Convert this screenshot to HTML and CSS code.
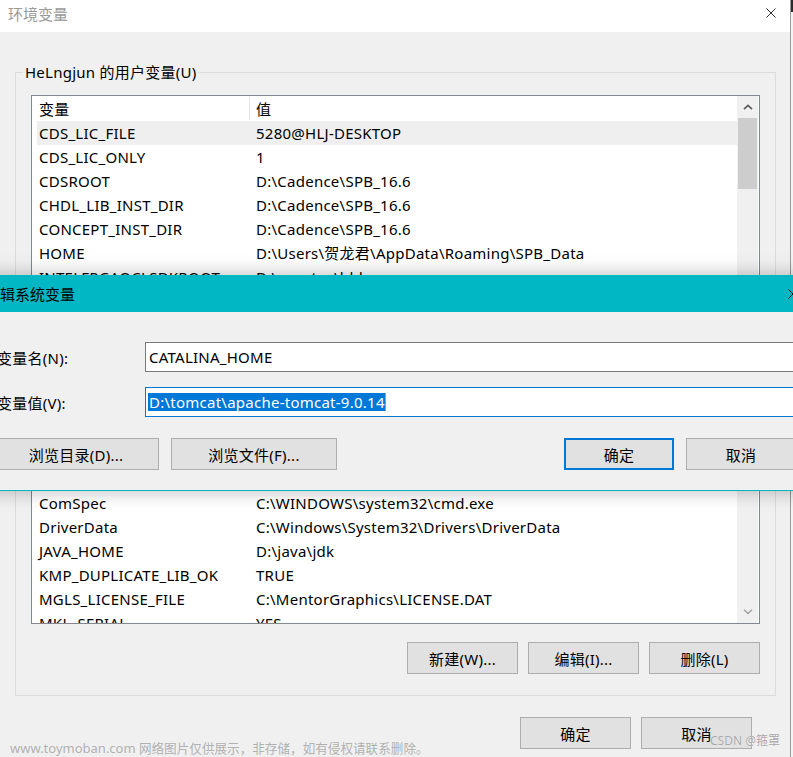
FILE: index.html
```html
<!DOCTYPE html>
<html lang="zh-CN">
<head>
<meta charset="utf-8">
<title>环境变量</title>
<link rel="stylesheet" href="styles.css">
</head>
<body>
<div class="window">
  <div class="titlebar">
    <span class="title">环境变量</span>
    <svg class="close" width="10" height="10" viewBox="0 0 10 10"><path d="M0.5 0.5L9.5 9.5M9.5 0.5L0.5 9.5" stroke="#333" stroke-width="1" fill="none"/></svg>
  </div>
  <div class="client">
    <fieldset class="group">
      <legend>HeLngjun 的用户变量(U)</legend>
      <div class="list">
        <div class="list-main">
          <div class="thead">
            <div class="th th1">变量</div>
            <div class="th th2">值</div>
          </div>
          <div class="row hl"><span class="c1">CDS_LIC_FILE</span><span>5280@HLJ-DESKTOP</span></div>
          <div class="row"><span class="c1">CDS_LIC_ONLY</span><span>1</span></div>
          <div class="row"><span class="c1">CDSROOT</span><span>D:\Cadence\SPB_16.6</span></div>
          <div class="row"><span class="c1">CHDL_LIB_INST_DIR</span><span>D:\Cadence\SPB_16.6</span></div>
          <div class="row"><span class="c1">CONCEPT_INST_DIR</span><span>D:\Cadence\SPB_16.6</span></div>
          <div class="row"><span class="c1">HOME</span><span>D:\Users\贺龙君\AppData\Roaming\SPB_Data</span></div>
          <div class="row"><span class="c1">INTELFPGAOCLSDKROOT</span><span>D:\quartus\hld</span></div>
          <div class="hidden-rows"></div>
          <div class="row"><span class="c1">ComSpec</span><span>C:\WINDOWS\system32\cmd.exe</span></div>
          <div class="row"><span class="c1">DriverData</span><span>C:\Windows\System32\Drivers\DriverData</span></div>
          <div class="row"><span class="c1">JAVA_HOME</span><span>D:\java\jdk</span></div>
          <div class="row"><span class="c1">KMP_DUPLICATE_LIB_OK</span><span>TRUE</span></div>
          <div class="row"><span class="c1">MGLS_LICENSE_FILE</span><span>C:\MentorGraphics\LICENSE.DAT</span></div>
          <div class="row"><span class="c1">MKL_SERIAL</span><span>YES</span></div>
        </div>
        <div class="scroll">
          <div class="sb-btn"><svg width="10" height="6" viewBox="0 0 10 6"><path d="M1 5.2L5 1.4L9 5.2" fill="none" stroke="#5a5a5a" stroke-width="1.6"/></svg></div>
          <div class="thumb"></div>
          <div class="sb-track"></div>
          <div class="sb-btn"><svg width="10" height="6" viewBox="0 0 10 6"><path d="M1 0.8L5 4.6L9 0.8" fill="none" stroke="#a0a0a0" stroke-width="1.4"/></svg></div>
        </div>
      </div>
      <div class="actions">
        <button class="btn">新建(W)...</button>
        <button class="btn">编辑(I)...</button>
        <button class="btn">删除(L)</button>
      </div>
    </fieldset>
    <div class="footer">
      <button class="btn">确定</button>
      <button class="btn">取消</button>
    </div>
  </div>
</div>

<div class="dialog">
  <div class="dlg-title">
    <span>编辑系统变量</span>
    <svg width="10" height="10" viewBox="0 0 10 10"><path d="M0.5 0.5L9.5 9.5M9.5 0.5L0.5 9.5" stroke="#111" stroke-width="1" fill="none"/></svg>
  </div>
  <div class="dlg-body">
    <div class="field">
      <span class="label">变量名(N):</span>
      <div class="input">CATALINA_HOME</div>
    </div>
    <div class="field">
      <span class="label">变量值(V):</span>
      <div class="input focus"><span class="sel">D:\tomcat\apache-tomcat-9.0.14</span></div>
    </div>
    <div class="dlg-buttons">
      <button class="btn wide">浏览目录(D)...</button>
      <button class="btn wide">浏览文件(F)...</button>
      <span class="grow"></span>
      <button class="btn small primary">确定</button>
      <button class="btn small">取消</button>
    </div>
  </div>
</div>

<div class="wm"><span class="wm-url">www.toymoban.com</span> 网络图片仅供展示，非存储，如有侵权请联系删除。</div>
<div class="csdn">CSDN @箍罩</div>
</body>
</html>
```

FILE: styles.css
```css
html, body {
  margin: 0;
  height: 100%;
  overflow: hidden;
}

body {
  background: linear-gradient(#2b2b2b, #2b2b2b) right top / 2px 12px no-repeat, #f4f4f4;
  font-family: "Noto Sans", "Noto Sans CJK SC", sans-serif;
  font-size: 15px;
  letter-spacing: 0.25px;
  color: #000;
}

.window {
  width: 790px;
  height: 757px;
  border-right: 1px solid #9a9a9a;
  background: #f0f0f0;
}

.titlebar {
  height: 32px;
  background: #fff;
  display: flex;
  justify-content: space-between;
  align-items: flex-start;
  padding: 0 14px 0 8px;
  box-sizing: border-box;
}

.title {
  color: #9a9a9a;
  line-height: 20px;
  margin-top: 4px;
  letter-spacing: 0;
}

.close {
  margin-top: 8px;
}

.client {
  padding: 30px 14px 0 15px;
}

.group {
  margin: 0;
  border: 1px solid #dcdcdc;
  padding: 13px 15px 21px 15px;
  min-width: 0;
}

.group legend {
  margin-left: -8px;
  padding: 0 2px;
  line-height: 20px;
}

.list {
  height: 529px;
  box-sizing: border-box;
  border: 1px solid #828790;
  background: #fff;
  display: flex;
  overflow: hidden;
}

.list-main {
  flex: 1;
  overflow: hidden;
}

.thead {
  display: flex;
  height: 25px;
  margin-left: 5px;
}

.th {
  margin-top: 1px;
  height: 23px;
  padding-top: 2px;
  line-height: 21px;
  box-sizing: border-box;
}

.th1 {
  width: 213px;
  padding-left: 2px;
  border-right: 1px solid #e5e5e5;
}

.th2 {
  padding-left: 6px;
}

.row {
  display: flex;
  height: 24px;
  line-height: 24px;
  margin-left: 5px;
  white-space: nowrap;
}

.row.hl {
  background: #efefef;
}

.c1 {
  flex: none;
  width: 219px;
  padding-left: 2px;
  box-sizing: border-box;
}

.hidden-rows {
  height: 202px;
}

.scroll {
  width: 21px;
  margin-right: 1px;
  background: #f0f0f0;
  display: flex;
  flex-direction: column;
}

.sb-btn {
  height: 22px;
  display: flex;
  align-items: center;
  justify-content: center;
  flex: none;
}

.thumb {
  height: 71px;
  background: #cdcdcd;
  margin: 0 1px;
  flex: none;
}

.sb-track {
  flex: 1;
}

.btn {
  width: 111px;
  height: 32px;
  box-sizing: border-box;
  border: 1px solid #adadad;
  background: #e1e1e1;
  font: inherit;
  letter-spacing: inherit;
  color: #000;
  padding: 0;
  display: flex;
  align-items: center;
  justify-content: center;
  flex: none;
}

.btn.primary {
  border: 2px solid #0078d7;
}

.actions {
  display: flex;
  justify-content: flex-end;
  gap: 10px;
  margin-top: 18px;
}

.footer {
  display: flex;
  justify-content: flex-end;
  gap: 10px;
  margin-top: 21px;
  padding-right: 24px;
}

/* overlaid dialog */
.dialog {
  position: absolute;
  left: -19px;
  top: 275px;
  width: 827px;
  height: 216px;
  box-sizing: border-box;
  border: 1px solid #00b7c3;
  background: #f0f0f0;
  box-shadow: 0 0 18px rgba(0, 0, 0, 0.28);
}

.dlg-title {
  height: 36px;
  background: #00b7c3;
  display: flex;
  align-items: center;
  justify-content: space-between;
  padding: 0 9px 0 3px;
  line-height: 20px;
  letter-spacing: 0;
}

.dlg-body {
  padding: 30px 11px 20px 11px;
}

.field {
  display: flex;
  align-items: center;
  height: 30px;
}

.field + .field {
  margin-top: 15px;
}

.label {
  width: 152px;
  flex: none;
  padding-left: 4px;
  box-sizing: border-box;
}

.input {
  flex: 1;
  height: 30px;
  box-sizing: border-box;
  border: 1px solid #7a7a7a;
  background: #fff;
  padding-left: 3px;
  display: flex;
  align-items: center;
  white-space: nowrap;
}

.input.focus {
  border-color: #0078d7;
  padding-left: 2px;
}

.sel {
  background: #0078d7;
  color: #fff;
  line-height: 18px;
  padding-left: 1px;
  border-right: 1px solid #f08a24;
}

.dlg-buttons {
  display: flex;
  gap: 12px;
  margin-top: 21px;
}

.btn.wide {
  width: 166px;
}

.btn.small {
  width: 110px;
}

.grow {
  flex: 1;
}

/* watermarks */
.wm {
  position: absolute;
  left: 10px;
  top: 739px;
  font-size: 12.6px;
  line-height: 18px;
  letter-spacing: 0;
  color: rgba(140, 140, 140, 0.65);
  white-space: nowrap;
}

.wm-url {
  font-size: 13px;
}

.csdn {
  position: absolute;
  left: 710px;
  top: 733px;
  font-size: 12px;
  line-height: 16px;
  letter-spacing: 0;
  color: #a8a8a8;
  text-shadow: 0 0 1px #fff;
  white-space: nowrap;
}
```
